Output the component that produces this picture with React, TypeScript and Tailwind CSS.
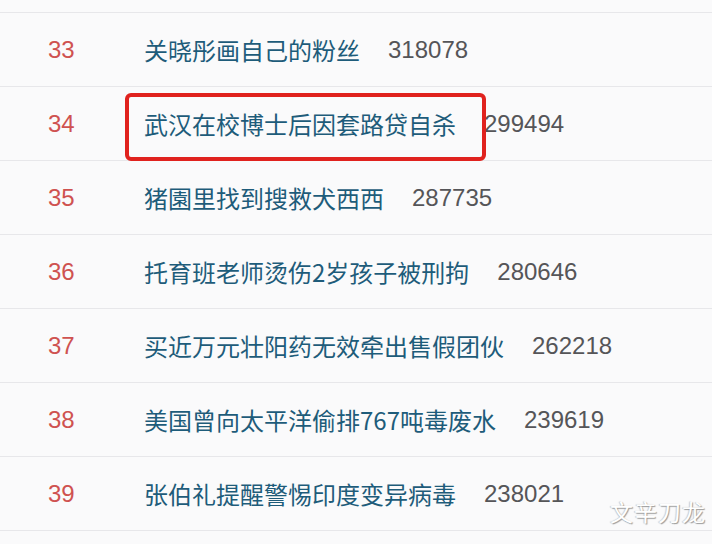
import React from "react";

const rows = [
  { rank: "33", title: "关晓彤画自己的粉丝", count: "318078" },
  { rank: "34", title: "武汉在校博士后因套路贷自杀", count: "299494", boxed: true },
  { rank: "35", title: "猪園里找到搜救犬西西", count: "287735" },
  { rank: "36", title: "托育班老师烫伤2岁孩子被刑拘", count: "280646" },
  { rank: "37", title: "买近万元壮阳药无效牵出售假团伙", count: "262218" },
  { rank: "38", title: "美国曾向太平洋偷排767吨毒废水", count: "239619" },
  { rank: "39", title: "张伯礼提醒警惕印度变异病毒", count: "238021" },
];

export default function App() {
  return (
    <div className="relative w-[712px] h-[544px] overflow-hidden bg-[#fafafb]">
      <div className="h-[12px]" />
      <div className="border-t border-[#e7e7ea]">
        {rows.map((r) => (
          <div
            key={r.rank}
            className="relative flex items-center h-[74px] border-b border-[#e7e7ea]"
          >
            <div
              className="w-[144px] pl-[48px] text-[24px] text-[#cf5250]"
              style={{ fontFamily: '"Liberation Sans", Arial, sans-serif' }}
            >
              {r.rank}
            </div>
            <div
              className="text-[24px] text-[#1e5c7a]"
              style={{ fontFamily: '"Noto Sans CJK SC", "Liberation Sans", sans-serif' }}
            >
              {r.title}
            </div>
            <div
              className="ml-[28px] text-[24px] text-[#555558]"
              style={{ fontFamily: '"Liberation Sans", Arial, sans-serif' }}
            >
              {r.count}
            </div>
            {r.boxed && (
              <div className="absolute left-[125px] top-[6px] w-[361px] h-[68px] border-[4px] border-[#e0221e] rounded-[6px]" />
            )}
          </div>
        ))}
      </div>
      <div
        className="absolute left-[610px] top-[494px] text-[23px] text-white tracking-[1px]"
        style={{
          fontFamily: '"Noto Sans CJK SC", sans-serif',
          textShadow: "1px 1px 1px #9a9a9a, -1px 0 1px #c8c8c8",
        }}
      >
        文辛刀龙
      </div>
    </div>
  );
}
